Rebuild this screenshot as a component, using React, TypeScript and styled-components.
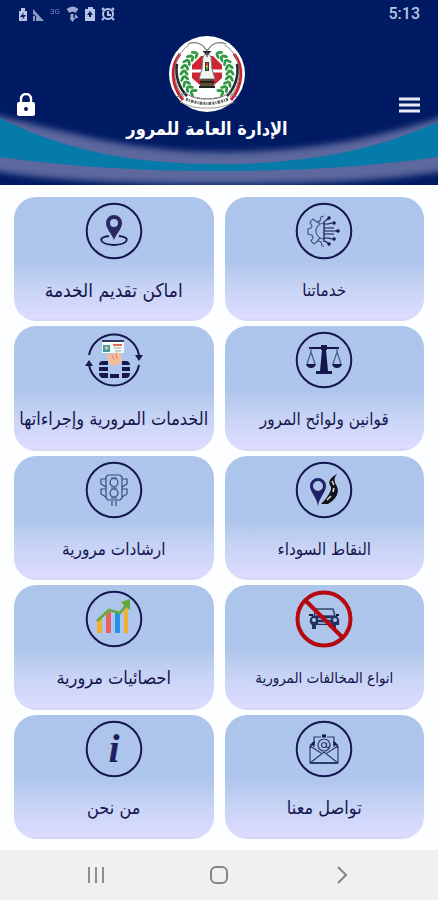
import React from "react";
import styled, { createGlobalStyle } from "styled-components";

const navy = "#15154f";

const GlobalStyle = createGlobalStyle`
  *, *::before, *::after { box-sizing: border-box; }
  body { margin: 0; background: #fdfeff; }
  button { font: inherit; color: inherit; border: 0; padding: 0; background: none; cursor: pointer; }
  svg { display: block; }
`;

const Screen = styled.div`
  min-height: 100vh;
  display: flex;
  flex-direction: column;
  font-family: "DejaVu Sans Condensed", "DejaVu Sans", sans-serif;
`;

const Header = styled.header`
  position: relative;
  height: 185px;
  background: #001a63;
  color: #fff;
  overflow: hidden;
`;

const Waves = styled.svg`
  position: absolute;
  left: 0;
  bottom: 0;
  width: 100%;
  height: 75px;
`;

const StatusBar = styled.div`
  position: relative;
  display: flex;
  align-items: center;
  justify-content: space-between;
  height: 28px;
  padding: 0 18px;
  color: #b9c4e4;
`;

const StatusIcons = styled.div`
  display: flex;
  align-items: center;
  gap: 4px;
`;

const Network = styled.span`
  font: 8px/12px Roboto, sans-serif;
  width: 14px;
  height: 16px;
  text-align: center;
  opacity: 0.6;
`;

const Clock = styled.time`
  font: 500 16px/20px Roboto, sans-serif;
`;

const AppBar = styled.div`
  position: relative;
  display: flex;
  justify-content: space-between;
  padding: 7px 18px 0 16px;
`;

const BarButton = styled.button<{ $width: number }>`
  display: flex;
  justify-content: flex-end;
  align-items: center;
  width: ${(p) => p.$width}px;
  height: 28px;
  margin-top: 56px;
`;

const Brand = styled.div`
  display: flex;
  flex-direction: column;
  align-items: center;
`;

const Title = styled.h1`
  margin: 2px 0 0;
  font-size: 18px;
  line-height: 28px;
  font-weight: 700;
  white-space: nowrap;
`;

const Grid = styled.main`
  flex: 1;
  display: grid;
  grid-template-columns: 1fr 1fr;
  grid-auto-rows: 1fr;
  gap: 5px 11px;
  padding: 12px 14px 11px;
`;

const Card = styled.button`
  display: flex;
  flex-direction: column;
  align-items: center;
  min-height: 124px;
  padding-top: 5px;
  border-radius: 22px;
  background: linear-gradient(#adc5ea 0%, #afc6ec 52%, #c8d4f5 74%, #dcdcff 97%, #d3d7ef 100%);
`;

const Label = styled.span<{ $size: number }>`
  margin-top: 18px;
  font-size: ${(p) => p.$size}px;
  line-height: 24px;
  color: ${navy};
  white-space: nowrap;
`;

const NavBar = styled.nav`
  display: flex;
  align-items: center;
  justify-content: space-between;
  height: 50px;
  padding: 0 84px;
  background: #f0f0f0;
`;

const NavButton = styled.button`
  display: grid;
  place-items: center;
  width: 24px;
  height: 32px;
`;

const Leaves = () => (
  <g fill="#2f9a41">
    {[-152, -138, -124, -110, -96, -82, -68, -54, -40].map((a) => (
      <g key={a} transform={`rotate(${a + 6}) translate(0 -23)`}>
        <ellipse cx="0" cy="-2.5" rx="3.4" ry="1.5" transform="rotate(35)" />
        <ellipse cx="0" cy="2.5" rx="3.4" ry="1.5" transform="rotate(-35)" />
      </g>
    ))}
  </g>
);

const Emblem = () => (
  <svg width="78" height="78" viewBox="-39 -39 78 78" aria-hidden="true">
    <circle r="38" fill="#fff" />
    {[1, -1].map((s) => (
      <g key={s} transform={`scale(${s} 1)`} fill="none">
        <path d="M-27 -20C-37 -8 -36 12 -24 26" stroke="#c82430" strokeWidth="3" />
        <path d="M-18 -29C-36 -17 -36 9 -23 23" stroke="#888" strokeWidth="1" />
        <path d="M-30 -10C-32 2 -28 14 -20 22" stroke="#262b2e" strokeWidth="2.6" />
        <path d="M-1 -24C-5 -31 -12 -33 -19 -30" stroke="#777" strokeWidth="1.2" />
        <Leaves />
        <path d="M-30 23L-22 19Q-11 26 0 25" stroke="#777" strokeWidth="1" />
        <path d="M-27 28Q-13 35 0 34" stroke="#999" strokeWidth="1" />
      </g>
    ))}
    <path d="M-6-18H6L15-9V4L6 12H-6L-15 4V-9Z" fill="#cf2434" />
    <path d="M-15-3H15M0-18V12" stroke="#fff" strokeWidth="3" />
    <path d="M-4-17Q0-24 4-17L5-5 8 5H-8L-5-5Z" fill="#f4f4f0" stroke="#777" />
    <path d="M-4-23L0-19 4-23M0-25V-17" stroke="#555" strokeWidth="1.3" />
    <rect x="-2" y="-12" width="4" height="9" fill="#333" />
    <circle cy="-10" r="1.3" fill="#de3b35" />
    <circle cy="-7.5" r="1.2" fill="#e8c33a" />
    <circle cy="-5" r="1.3" fill="#2f9a41" />
    <path d="M-6 5H6L7 13H-7Z" fill="#594d37" />
    <path d="M-7 8H7M-8 13H8" stroke="#22221f" strokeWidth="2" />
    <path d="M-21 25Q0 34 21 25" fill="none" stroke="#666" strokeWidth="3" strokeDasharray="2 1 1 1 3 1" />
    <path d="M-16 22Q0 27 16 22" fill="none" stroke="#777" strokeDasharray="3 1 1 1" />
  </svg>
);

const IconFrame = ({ children, ring = true }: { children: React.ReactNode; ring?: boolean }) => (
  <svg width="58" height="58" viewBox="-29 -29 58 58" fill="none" stroke={navy} strokeWidth="1.2" aria-hidden="true">
    {ring && <circle r="27.3" strokeWidth="2" />}
    {children}
  </svg>
);

const ServicesIcon = () => (
  <IconFrame>
    <g stroke="#47598c">
      <path d="M0-15L-3-14-4-10-7-9-11-12-14-9-12-5-13-3-16-2V3L-12 4-11 7-13 10-10 13-6 10-3 11-2 15H0" />
      <path d="M0-8A8 8 0 0 0 0 8M-7-10L-4-7M-7 10L-4 7" />
    </g>
    <path d="M0-10V11M0-7H4L8-8M0-3H10M0 0H13M0 3H10M0 7H4L8 8M1-10L5-13M1 10L5 13" />
    <g fill={navy} stroke="none">
      <circle cx="5" cy="-13" r="1.7" /><circle cx="10" cy="-8" r="1.8" />
      <circle cx="14" r="1.8" /><circle cx="10" cy="8" r="1.8" /><circle cx="5" cy="13" r="1.7" />
    </g>
  </IconFrame>
);

const PlacesIcon = () => (
  <IconFrame>
    <path d="M-5 5C-17 6-15 13 0 14C15 13 17 6 5 5" strokeWidth="1.8" />
    <path fillRule="evenodd" fill="#292860" stroke="none" d="M0 9C-2 3-8-2-8-8A8 8 0 0 1 8-8C8-2 2 3 0 9ZM0-12A4 4 0 1 0 0-4A4 4 0 0 0 0-12Z" />
  </IconFrame>
);

const LawsIcon = () => (
  <IconFrame>
    <path d="M-15-12H15" strokeWidth="2" />
    <path d="M-3-15H3V-10H-3ZM-2-10H2L4 11H8V14H-8V11H-4Z" fill={navy} stroke="none" />
    {[-13, 13].map((x) => (
      <g key={x} transform={`translate(${x} 0)`}>
        <path d="M0-12V-8L-4 4M0-8L4 4" stroke="#47598c" />
        <path d="M-5 4H5Q4 8 0 8Q-4 8-5 4Z" fill={navy} stroke="none" />
      </g>
    ))}
  </IconFrame>
);

const ProceduresIcon = () => (
  <IconFrame ring={false}>
    <path d="M-25-5A25.5 25.5 0 0 1 25-5M25 5A25.5 25.5 0 0 1-25 5" strokeWidth="2" />
    <path d="M21-5H29L25 1ZM-29 6H-21L-25 0Z" fill={navy} stroke="none" />
    <rect x="-12" y="-20" width="22" height="13" fill="#f7fbf5" stroke="none" />
    <path d="M-12-19H10" stroke="#343867" strokeWidth="2" />
    <path d="M-1-15H8" stroke="#e36660" strokeWidth="2" />
    <path d="M0-12H7M1-9H7" stroke="#87a3a8" />
    <rect x="-11" y="-15" width="7" height="7" fill="#3b9ba6" stroke="none" />
    <circle cx="-7.5" cy="-12" r="1.8" fill="#f1bd99" stroke="none" />
    <path d="M-7-5Q-4-8-2-5L2-8 7-6 8 1 4 5H-4L-6 0Z" fill="#f2bd9c" stroke="none" />
    <path d="M-2-5L0 0M2-6L3-1" stroke="#d9926f" />
    <g fill={navy} stroke="none">
      <path d="M-11 1H-6V5H-15Q-15 1-11 1ZM-15 7H-6V11H-15ZM-15 13H-6V18H-12Q-15 17-15 13ZM-4 14H5V18H-4ZM8 1H13Q16 2 16 5H8ZM8 7H16V11H8ZM8 13H16Q16 18 12 18H8Z" />
    </g>
  </IconFrame>
);

const BlackSpotsIcon = () => (
  <IconFrame>
    <path d="M13-16C3-10 5-7 7-3C8 1 3 8-3 14H4Q13 9 14 1C14-6 7-8 13-16Z" fill="#11141c" stroke="none" />
    <path d="M8-9L10-5M10-2L9 2M7 6L3 10" stroke="#d5dfc9" strokeWidth="1.6" />
    <path fillRule="evenodd" fill="#211f67" stroke="none" d="M-6 16C-7 8-14 2-14-4A8 8 0 0 1 2-4C2 2-5 8-6 16ZM-6-9A5 5 0 1 0-6 1A5 5 0 0 0-6-9Z" />
  </IconFrame>
);

const GuidanceIcon = () => (
  <IconFrame>
    <g stroke="#3a4a80">
      <path d="M-6-15H6L8-13V8L6 10H-6L-8 8V-13ZM-2 11V16M2 11V16" />
      <circle cy="-7.5" r="4" /><circle cy="3" r="4" />
      <path d="M-3-12H3M-3-2H3M-3 8H3" />
      <path d="M-8-11H-13V-6L-8-3M-8-1H-13V4L-8 7M8-11H13V-6L8-3M8-1H13V4L8 7" />
    </g>
  </IconFrame>
);

const ViolationsIcon = () => (
  <IconFrame ring={false}>
    <path d="M-10-3L-8-10H9L11-3M-10-3H11" stroke="#34456f" strokeWidth="1.6" />
    <path d="M-12-3H13Q16 0 15 6H12V10H8V6H-8V10H-12V6Q-15 4-14 0Z" fill="#24305f" stroke="none" />
    <path d="M-6 0H7M-6 4H7" stroke="#afc6ec" strokeWidth="1.5" />
    <circle cx="-10" cy="1" r="2" fill="#afc6ec" stroke="none" />
    <circle cx="11" cy="1" r="2" fill="#afc6ec" stroke="none" />
    <path d="M-15-4H-11M12-4H15" strokeWidth="2" />
    <circle r="26.5" stroke="#b5080f" strokeWidth="4" />
    <path d="M-19-19L19 19" stroke="#b5080f" strokeWidth="4" />
  </IconFrame>
);

const StatisticsIcon = () => (
  <IconFrame>
    <g stroke="none">
      <path d="M-17 3L-12-1V14H-17ZM10-9L14-12V14H10Z" fill="#efaf2e" />
      <path d="M-8-6L-3-8V14H-8Z" fill="#ec6263" />
      <path d="M1-7L6-5V14H1Z" fill="#2494df" />
      <path d="M7-17L16-20V-9L12-12 9-15Z" fill="#62a83b" />
    </g>
    <path d="M-17 2L-5-9 6-6 14-16" stroke="#62a83b" strokeWidth="2.6" />
  </IconFrame>
);

const ContactIcon = () => (
  <IconFrame>
    <g stroke="#2c3b70">
      <path d="M-10-2V-12H-3M3-12H10V-2M-10-7L-14-3V14H14V-3L10-7M-14-3L-3 4M14-3L3 4M-14 14L0 3L14 14" />
      <path d="M-14 14H14" strokeWidth="2" />
      <circle cy="-4" r="6" /><circle cy="-4" r="2.5" />
      <path d="M2.5-6V-2Q5 0 6-4" />
    </g>
    <path d="M-2-13H2" strokeWidth="3" />
    <path d="M10-7L13-4H10ZM-10-7L-13-4H-10Z" fill={navy} />
  </IconFrame>
);

const AboutIcon = () => (
  <IconFrame>
    <text x="0" y="13" textAnchor="middle" fill="#211f5b" stroke="none" fontFamily="Liberation Serif, serif" fontWeight="700" fontStyle="italic" fontSize="40">i</text>
  </IconFrame>
);

const items = [
  { label: "خدماتنا", size: 17, Icon: ServicesIcon },
  { label: "اماكن تقديم الخدمة", size: 19, Icon: PlacesIcon },
  { label: "قوانين ولوائح المرور", size: 17, Icon: LawsIcon },
  { label: "الخدمات المرورية وإجراءاتها", size: 18, Icon: ProceduresIcon },
  { label: "النقاط السوداء", size: 17, Icon: BlackSpotsIcon },
  { label: "ارشادات مرورية", size: 17, Icon: GuidanceIcon },
  { label: "انواع المخالفات المرورية", size: 15, Icon: ViolationsIcon },
  { label: "احصائيات مرورية", size: 18, Icon: StatisticsIcon },
  { label: "تواصل معنا", size: 18, Icon: ContactIcon },
  { label: "من نحن", size: 18, Icon: AboutIcon },
];

export default function App() {
  return (
    <Screen>
      <GlobalStyle />
      <Header>
        <Waves viewBox="0 110 438 75" preserveAspectRatio="none" aria-hidden="true">
          <defs>
            <filter id="soft" x="-10%" y="-20%" width="120%" height="140%"><feGaussianBlur stdDeviation="3" /></filter>
          </defs>
          <path d="M-20 112C70 132 130 152 219 152S370 141 458 112V168Q390 184 219 184T-20 168Z" fill="#5c689e" filter="url(#soft)" />
          <path d="M0 118C65 151 134 164 219 164S374 151 438 122V157Q340 171 219 171T0 157Z" fill="#067aa8" />
        </Waves>
        <StatusBar>
          <StatusIcons>
            <svg width="10" height="14" viewBox="0 0 10 14" fill="currentColor" aria-hidden="true">
              <path fillRule="evenodd" d="M3 1H7V4H9V14H1V4H3ZM6 5L2 10H5L4 13 8 8H5Z" />
            </svg>
            <svg width="12" height="14" viewBox="0 0 12 14" fill="currentColor" aria-hidden="true"><path d="M1 2L12 14H4V9L1 7ZM1 9H3V14H1Z" opacity=".75" /></svg>
            <Network>3G</Network>
            <svg width="13" height="16" viewBox="0 0 12 16" fill="currentColor" aria-hidden="true">
              <path d="M0 3Q6-2 12 3L9 7Q6 4 3 7ZM4 8H7V12H9L6 16 3 12H4ZM9 8L12 12H8Z" opacity=".85" />
            </svg>
            <svg width="14" height="14" viewBox="0 0 14 14" fill="currentColor" aria-hidden="true">
              <path fillRule="evenodd" d="M5 0H10V2H12V14H2V2H5ZM4 8H6V10H8V8H10L7 4Z" />
            </svg>
            <svg width="14" height="14" viewBox="0 0 14 14" fill="none" stroke="currentColor" strokeWidth="2" aria-hidden="true">
              <circle cx="7" cy="7" r="5" /><path d="M7 4V8H10M1 3L3 1M11 1L13 3M3 11L1 13M11 11L13 13" />
            </svg>
          </StatusIcons>
          <Clock>5:13</Clock>
        </StatusBar>
        <AppBar>
          <BarButton type="button" $width={20} aria-label="تسجيل الدخول">
            <svg width="20" height="24" viewBox="0 0 20 24" fill="none" aria-hidden="true">
              <path d="M5 10V6A5 5 0 0 1 15 6V10" stroke="#fff" strokeWidth="2.4" />
              <rect x="1" y="9" width="18" height="14" rx="2" fill="#fff" />
              <circle cx="10" cy="16" r="2" fill="#001a63" />
            </svg>
          </BarButton>
          <Brand>
            <Emblem />
            <Title dir="rtl">الإدارة العامة للمرور</Title>
          </Brand>
          <BarButton type="button" $width={42} aria-label="القائمة">
            <svg width="22" height="16" viewBox="0 0 22 16" aria-hidden="true"><path d="M1 2H22M1 8H22M1 14H22" stroke="#e9ecf7" strokeWidth="3" /></svg>
          </BarButton>
        </AppBar>
      </Header>
      <Grid dir="rtl">
        {items.map(({ label, size, Icon }) => (
          <Card key={label} type="button">
            <Icon />
            <Label $size={size}>{label}</Label>
          </Card>
        ))}
      </Grid>
      <NavBar>
        <NavButton type="button" aria-label="التطبيقات الأخيرة">
          <svg width="18" height="18" viewBox="0 0 18 18" aria-hidden="true"><path d="M2 1V17M9 1V17M16 1V17" stroke="#8e8e8e" strokeWidth="2" /></svg>
        </NavButton>
        <NavButton type="button" aria-label="الشاشة الرئيسية">
          <svg width="18" height="18" viewBox="0 0 18 18" aria-hidden="true"><rect x="1" y="1" width="16" height="16" rx="5" fill="none" stroke="#858585" strokeWidth="2" /></svg>
        </NavButton>
        <NavButton type="button" aria-label="رجوع">
          <svg width="12" height="18" viewBox="0 0 12 18" aria-hidden="true"><path d="M2 1L10 9 2 17" fill="none" stroke="#858585" strokeWidth="2" /></svg>
        </NavButton>
      </NavBar>
    </Screen>
  );
}
